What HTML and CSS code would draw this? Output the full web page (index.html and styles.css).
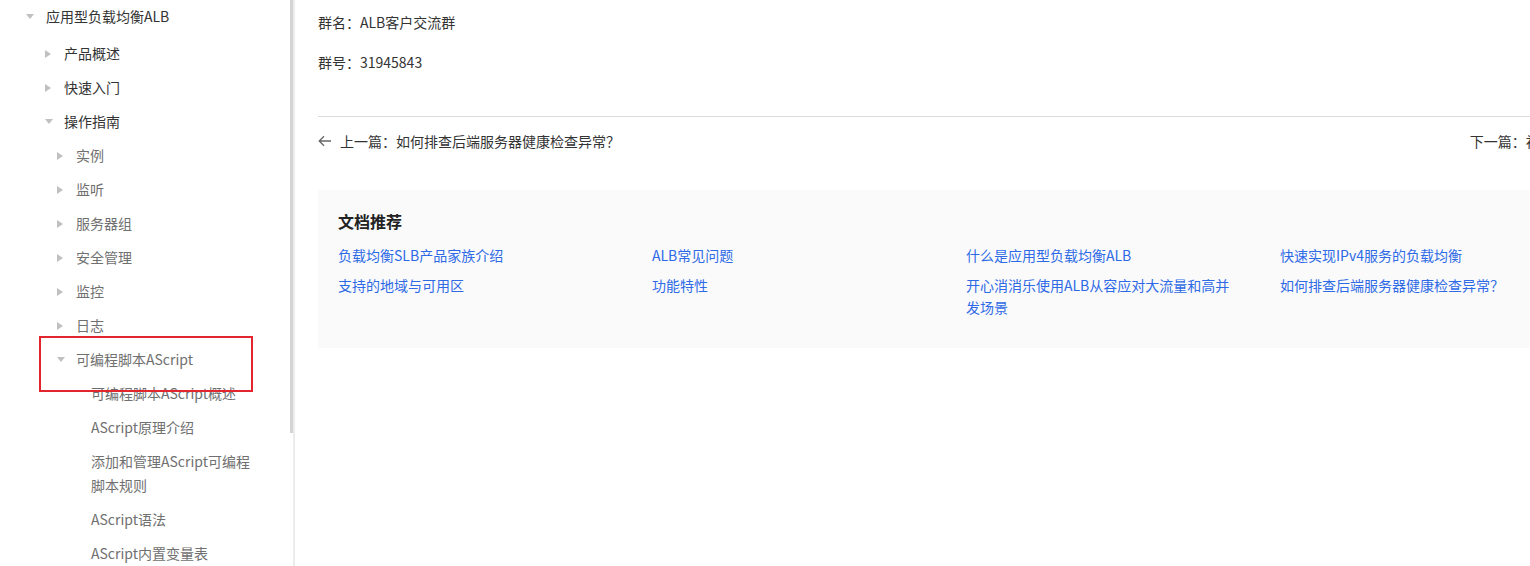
FILE: index.html
```html
<!DOCTYPE html>
<html lang="zh-CN">

<head>
    <meta charset="UTF-8">
    <meta name="viewport" content="width=device-width, initial-scale=1.0">
    <title>可编程脚本AScript - 应用型负载均衡ALB</title>
    <link rel="stylesheet" href="styles.css">
</head>

<body>
    <div class="page">
        <!-- Left navigation tree -->
        <aside class="sidebar">
            <ul class="tree">
                <li class="node lv0 open"><span class="arrow"></span>应用型负载均衡ALB</li>
                <li class="node lv1"><span class="arrow"></span>产品概述</li>
                <li class="node lv1"><span class="arrow"></span>快速入门</li>
                <li class="node lv1 open"><span class="arrow"></span>操作指南</li>
                <li class="node lv2"><span class="arrow"></span>实例</li>
                <li class="node lv2"><span class="arrow"></span>监听</li>
                <li class="node lv2"><span class="arrow"></span>服务器组</li>
                <li class="node lv2"><span class="arrow"></span>安全管理</li>
                <li class="node lv2"><span class="arrow"></span>监控</li>
                <li class="node lv2"><span class="arrow"></span>日志</li>
                <li class="node lv2 open"><span class="arrow"></span>可编程脚本AScript</li>
                <li class="node lv3">可编程脚本AScript概述</li>
                <li class="node lv3">AScript原理介绍</li>
                <li class="node lv3">添加和管理AScript可编程<br>脚本规则</li>
                <li class="node lv3">AScript语法</li>
                <li class="node lv3">AScript内置变量表</li>
            </ul>
            <div class="highlight-box"></div>
            <div class="scroll-thumb"></div>
        </aside>

        <main class="content">
            <p class="line">群名：ALB客户交流群</p>
            <p class="line">群号：31945843</p>

            <hr class="divider">

            <div class="pager">
                <a class="prev">
                    <svg class="arrow-left" width="14" height="12" viewBox="0 0 14 12">
                        <path d="M13 6H1.5M6 1.2L1.2 6 6 10.8" fill="none" stroke="#666" stroke-width="1.3"/>
                    </svg>
                    上一篇：如何排查后端服务器健康检查异常？
                </a>
                <a class="next">下一篇：初始化ALB实例</a>
            </div>

            <section class="recommend">
                <h3>文档推荐</h3>
                <div class="rec-grid">
                    <a>负载均衡SLB产品家族介绍</a>
                    <a>ALB常见问题</a>
                    <a>什么是应用型负载均衡ALB</a>
                    <a>快速实现IPv4服务的负载均衡</a>
                    <a>支持的地域与可用区</a>
                    <a>功能特性</a>
                    <a>开心消消乐使用ALB从容应对大流量和高并发场景</a>
                    <a>如何排查后端服务器健康检查异常？</a>
                </div>
            </section>
        </main>
    </div>
</body>

</html>
```

FILE: styles.css
```css
html,
body {
    margin: 0;
    padding: 0;
    overflow: hidden;
}

body {
    font-family: "Noto Sans CJK SC", "Noto Sans", sans-serif;
    font-size: 14px;
    color: #333;
    background-color: #fff;
}

.page {
    display: flex;
    height: 566px;
}

/* Sidebar tree */
.sidebar {
    position: relative;
    width: 293px;
    flex-shrink: 0;
    border-right: 2px solid #ececec;
    overflow: hidden;
}

.tree {
    list-style: none;
    margin: 0;
    padding: 0;
}

.node {
    position: relative;
    line-height: 24px;
    padding: 5px 0;
    white-space: nowrap;
}

.node .arrow {
    position: absolute;
    top: 14px;
    width: 0;
    height: 0;
    border-top: 4px solid transparent;
    border-bottom: 4px solid transparent;
    border-left: 6px solid #c0c0c0;
}

.node.open .arrow {
    top: 15px;
    border-left: 4px solid transparent;
    border-right: 4px solid transparent;
    border-top: 5px solid #c0c0c0;
    border-bottom: 0;
}

.lv0 {
    padding-left: 46px;
    margin-top: -1px;
    margin-bottom: 3px;
}

.lv0 .arrow {
    left: 26px;
}

.lv1 {
    padding-left: 64px;
}

.lv1 .arrow {
    left: 45px;
}

.lv2 {
    padding-left: 76px;
    color: #707070;
}

.lv2 .arrow {
    left: 57px;
}

.lv3 {
    padding-left: 91px;
    color: #707070;
}

.highlight-box {
    position: absolute;
    left: 39px;
    top: 336px;
    width: 210px;
    height: 52px;
    border: 2px solid #e3262e;
}

.scroll-thumb {
    position: absolute;
    right: 0;
    top: 0;
    width: 3px;
    height: 433px;
    background-color: #d4d4d4;
}

/* Main article area */
.content {
    flex-shrink: 0;
    width: 1296px;
    padding: 10px 0 0 23px;
}

.line {
    margin: 0 0 16px;
    line-height: 24px;
}

.divider {
    border: none;
    border-top: 1px solid #dcdcdc;
    margin: 42px 0 12px;
}

.pager {
    display: flex;
    justify-content: space-between;
    line-height: 24px;
}

.pager a {
    color: #333;
    cursor: pointer;
}

.prev {
    display: flex;
    align-items: center;
    gap: 8px;
}

.next {
    margin-right: -7px;
}

.recommend {
    margin-top: 37px;
    background-color: #fafafa;
    padding: 19px 20px 30px;
}

.recommend h3 {
    margin: 0 0 11px;
    font-size: 16px;
    font-weight: bold;
    line-height: 24px;
    color: #222;
}

.rec-grid {
    display: grid;
    grid-template-columns: repeat(4, 270px);
    column-gap: 44px;
    row-gap: 8px;
}

.rec-grid a {
    color: #2e6ae6;
    line-height: 22px;
    cursor: pointer;
}
```
